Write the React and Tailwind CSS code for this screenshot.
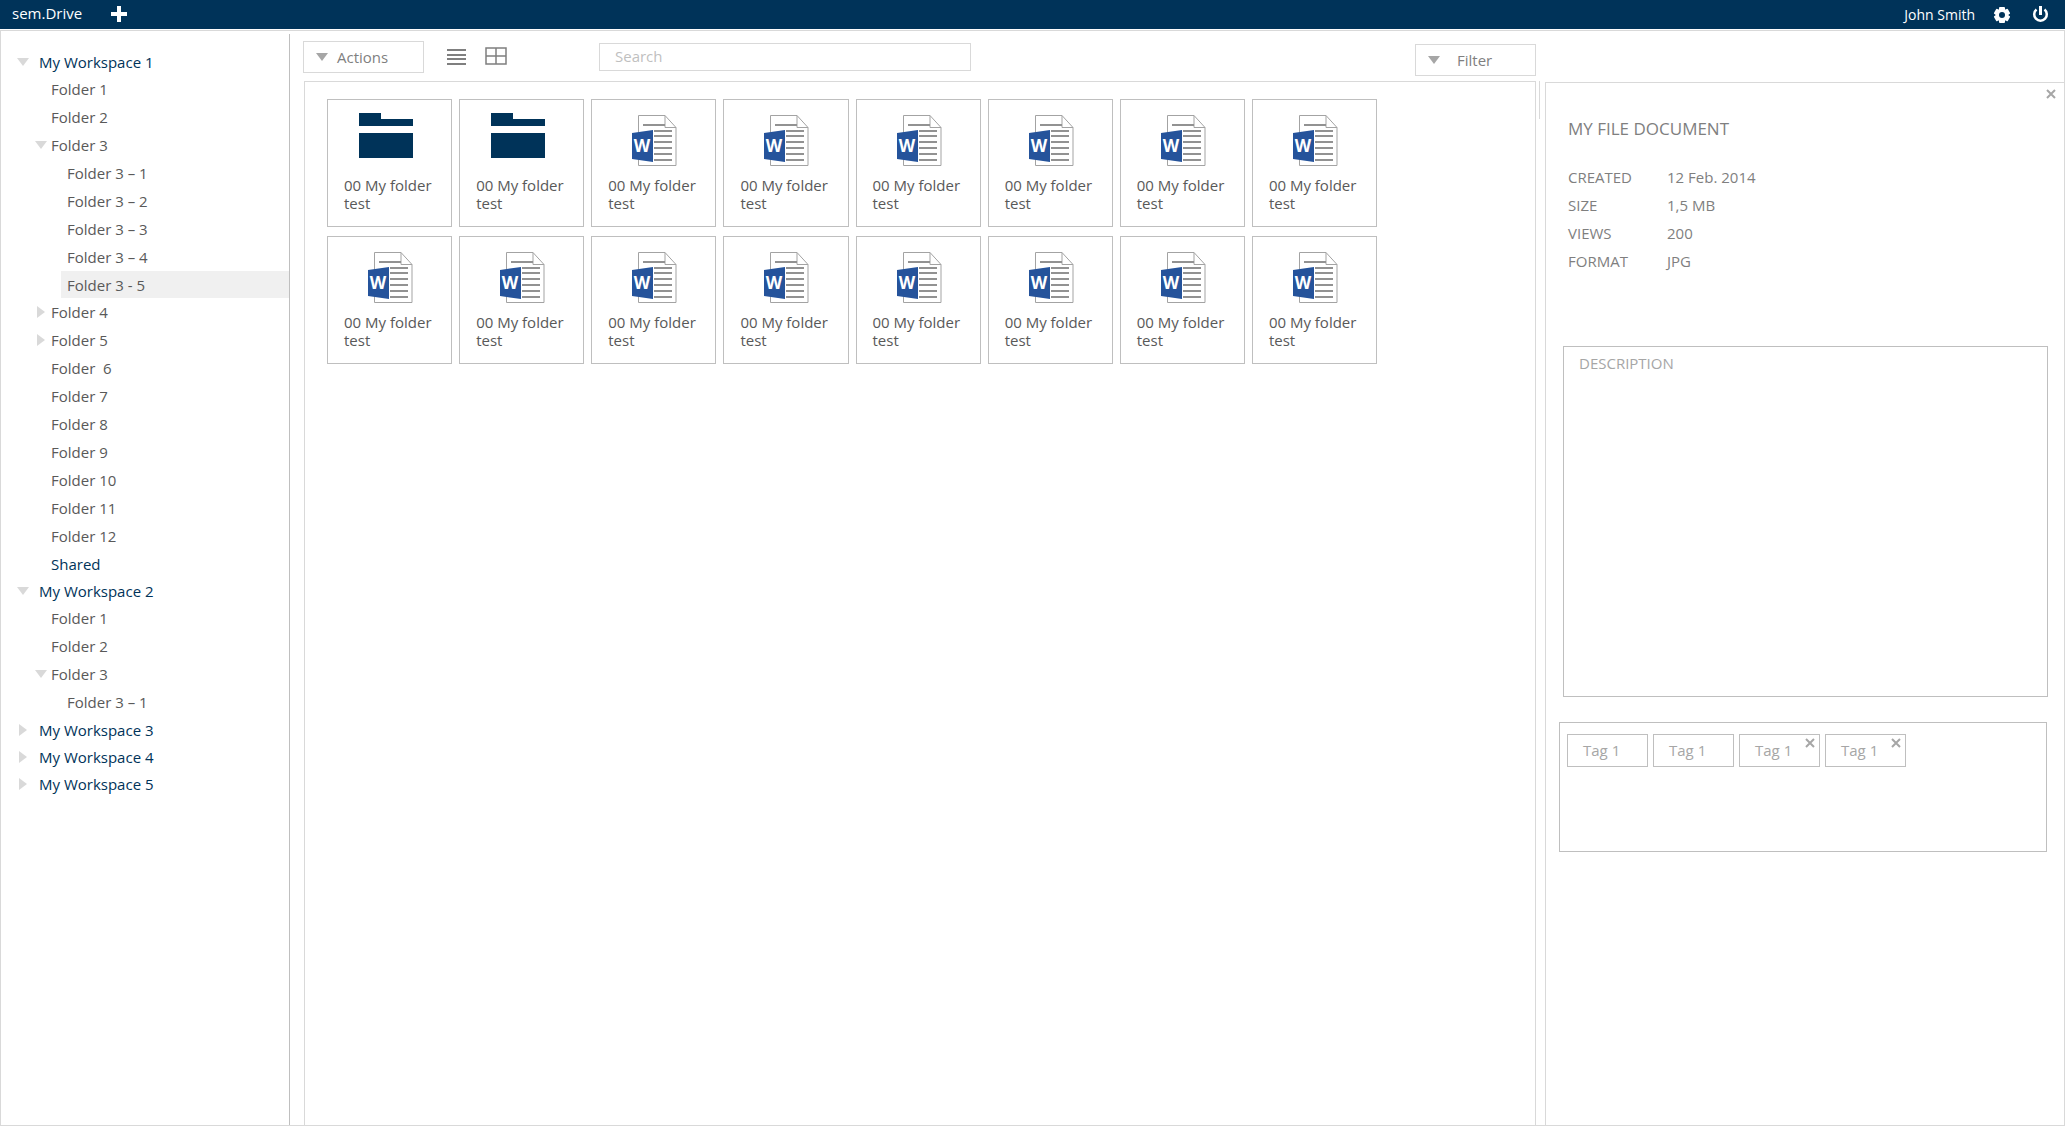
import React from "react";

const TREE = [
  { label: "My Workspace 1", level: 1, open: true },
  { label: "Folder 1", level: 2 },
  { label: "Folder 2", level: 2 },
  { label: "Folder 3", level: 2, open: true },
  { label: "Folder 3 – 1", level: 3 },
  { label: "Folder 3 – 2", level: 3 },
  { label: "Folder 3 – 3", level: 3 },
  { label: "Folder 3 – 4", level: 3 },
  { label: "Folder 3 - 5", level: 3, selected: true },
  { label: "Folder 4", level: 2, open: false },
  { label: "Folder 5", level: 2, open: false },
  { label: "Folder  6", level: 2 },
  { label: "Folder 7", level: 2 },
  { label: "Folder 8", level: 2 },
  { label: "Folder 9", level: 2 },
  { label: "Folder 10", level: 2 },
  { label: "Folder 11", level: 2 },
  { label: "Folder 12", level: 2 },
  { label: "Shared", level: 2, shared: true },
  { label: "My Workspace 2", level: 1, open: true },
  { label: "Folder 1", level: 2 },
  { label: "Folder 2", level: 2 },
  { label: "Folder 3", level: 2, open: true },
  { label: "Folder 3 – 1", level: 3 },
  { label: "My Workspace 3", level: 1, open: false },
  { label: "My Workspace 4", level: 1, open: false },
  { label: "My Workspace 5", level: 1, open: false },
];

const ITEMS = Array.from({ length: 16 }, (_, i) => ({
  id: i,
  kind: i < 2 ? "folder" : "word",
  name: "00 My folder test",
}));

const DETAILS = [
  ["CREATED", "12 Feb. 2014"],
  ["SIZE", "1,5 MB"],
  ["VIEWS", "200"],
  ["FORMAT", "JPG"],
];

const TAGS = [
  { id: 1, label: "Tag 1" },
  { id: 2, label: "Tag 1" },
  { id: 3, label: "Tag 1", removable: true },
  { id: 4, label: "Tag 1", removable: true },
];

function DownTriangle({ className }) {
  return (
    <svg viewBox="0 0 12 8" className={className} fill="currentColor" aria-hidden="true">
      <path d="M0 0h12L6 8z" />
    </svg>
  );
}

function RightTriangle({ className }) {
  return (
    <svg viewBox="0 0 8 12" className={className} fill="currentColor" aria-hidden="true">
      <path d="M0 0v12l8-6z" />
    </svg>
  );
}

function CrossIcon({ className }) {
  return (
    <svg viewBox="0 0 10 10" className={className} fill="none" stroke="currentColor" strokeWidth="2" aria-hidden="true">
      <path d="M1 1l8 8M9 1L1 9" />
    </svg>
  );
}

function FolderIcon() {
  return (
    <svg viewBox="0 0 54 45" className="h-[45px] w-[54px]" fill="#003359" aria-hidden="true">
      <path d="M0 0h22v6h32v7H0z" />
      <path d="M0 20h54v25H0z" />
    </svg>
  );
}

function WordIcon() {
  return (
    <svg viewBox="0 0 45 51" className="h-[51px] w-[45px]" aria-hidden="true">
      <path d="M6.5 .5H33l11 12v38H6.5z" fill="#fff" stroke="#a3a3a3" />
      <path d="M33 .5v12h11" fill="none" stroke="#a3a3a3" />
      <path d="M11 10h22M22 16h18M22 21h18M22 27h18M22 33h18M22 39h18M22 45h18" stroke="#929292" strokeWidth="2" />
      <path d="M0 18l21-3v32L0 44z" fill="#25539b" />
      <text
        x="10"
        y="37"
        textAnchor="middle"
        fill="#fff"
        className="font-['Open_Sans',sans-serif] text-[17px] font-bold"
      >
        W
      </text>
    </svg>
  );
}

function GearIcon() {
  return (
    <svg viewBox="0 0 18 18" className="size-[18px]" aria-hidden="true">
      <g fill="#fff">
        <rect x="6" y="1" width="6" height="16" rx="1" />
        <rect x="6" y="1" width="6" height="16" rx="1" transform="rotate(60 9 9)" />
        <rect x="6" y="1" width="6" height="16" rx="1" transform="rotate(120 9 9)" />
        <circle cx="9" cy="9" r="6.5" />
      </g>
      <circle cx="9" cy="9" r="3" fill="#003359" />
    </svg>
  );
}

function PowerIcon() {
  return (
    <svg viewBox="0 0 17 17" className="size-[17px]" fill="none" stroke="#fff" aria-hidden="true">
      <path d="M4.500 3.500a6.300 6.300 0 1 0 8 0" strokeWidth="2.500" />
      <path d="M8.500 0v9" strokeWidth="3" />
    </svg>
  );
}

function TreeRow({ item }) {
  const indent = item.level === 1 ? "pl-[38px]" : item.level === 2 ? "pl-[50px]" : "pl-[60px]";
  const blue = item.level === 1 || item.shared;
  const height = blue || item.selected ? "h-[27px]" : "h-7";
  const toggleBox = item.level === 1 ? "left-4" : "left-[34px]";
  return (
    <li
      role="treeitem"
      aria-level={item.level}
      aria-selected={!!item.selected}
      className={`relative flex items-center ${indent} ${height}`}
    >
      {item.open !== undefined && (
        <button
          type="button"
          aria-label={`Toggle ${item.label}`}
          className={`absolute flex w-3 items-center justify-center text-[#d9d9d9] ${toggleBox}`}
        >
          {item.open ? <DownTriangle className="h-2 w-3" /> : <RightTriangle className="h-3 w-2" />}
        </button>
      )}
      <a
        href="#"
        className={`flex h-full flex-1 items-center whitespace-pre ${blue ? "text-[#003359]" : "text-[#595959]"} ${
          item.level === 3 ? "pl-1.5" : ""
        } ${item.selected ? "bg-[#f0f0f0]" : ""}`}
      >
        {item.label}
      </a>
    </li>
  );
}

function Header() {
  return (
    <header className="flex h-[29px] items-center bg-[#003359] pr-4 pl-3 text-sm text-white">
      <span className="pb-0.5 text-[15px]">sem.Drive</span>
      <button type="button" aria-label="Add" className="ml-[29px] pb-0.5">
        <svg viewBox="0 0 16 16" className="size-4" fill="#fff" aria-hidden="true">
          <path d="M6 0h4v6h6v4h-6v6H6v-6H0V6h6z" />
        </svg>
      </button>
      <span className="mr-[18px] ml-auto">John Smith</span>
      <button type="button" aria-label="Settings" className="mr-[21px]">
        <GearIcon />
      </button>
      <button type="button" aria-label="Sign out">
        <PowerIcon />
      </button>
    </header>
  );
}

function Toolbar() {
  return (
    <div className="flex h-[50px] items-start pt-[10px] text-[#7f7f7f]">
      <button type="button" className="flex h-8 w-[121px] items-center gap-[9px] border border-[#d9d9d9] pl-3">
        <DownTriangle className="h-2 w-3 text-[#a6a6a6]" />
        Actions
      </button>
      <button type="button" aria-label="List view" className="mt-2 ml-[23px]">
        <svg viewBox="0 0 19 16" className="h-4 w-[19px]" stroke="#7f7f7f" strokeWidth="2" aria-hidden="true">
          <path d="M0 1h19M0 6h19M0 10h19M0 15h19" />
        </svg>
      </button>
      <button type="button" aria-label="Grid view" className="mt-[6px] ml-[19px]">
        <svg viewBox="0 0 22 18" className="h-[18px] w-[22px]" fill="none" stroke="#7f7f7f" aria-hidden="true">
          <path d="M1 1h20v16H1z" strokeWidth="1.500" />
          <path d="M11 1v16M1 9h20" strokeWidth="1.500" />
        </svg>
      </button>
      <input
        type="search"
        aria-label="Search"
        placeholder="Search"
        className="mt-[2px] ml-[92px] h-7 w-[372px] border border-[#d9d9d9] px-[15px] pb-0.5 outline-none placeholder:text-[#bfbfbf]"
      />
      <button
        type="button"
        className="mt-[3px] ml-auto flex h-8 w-[121px] items-center gap-[17px] border border-[#d9d9d9] pl-3"
      >
        <DownTriangle className="h-2 w-3 text-[#a6a6a6]" />
        Filter
      </button>
    </div>
  );
}

function FileCard({ item }) {
  return (
    <li className="h-32 border border-[#bfbfbf]">
      <a href="#" className="block h-full text-[#595959]">
        <span className={`flex h-[73px] justify-center ${item.kind === "folder" ? "pt-[13px] pr-2" : "pt-[15px] pl-0.5"}`}>
          {item.kind === "folder" ? <FolderIcon /> : <WordIcon />}
        </span>
        <span className="block px-4 pt-[3px] leading-[18px]">{item.name}</span>
      </a>
    </li>
  );
}

function DetailsPanel() {
  return (
    <aside className="mt-[51px] -mb-px flex w-[519px] flex-col border-t border-b border-l border-[#d9d9d9] text-[#7f7f7f]">
      <button type="button" aria-label="Close details" className="mt-1.5 mr-2 self-end text-[#a6a6a6]">
        <CrossIcon className="size-[10px]" />
      </button>
      <h2 className="mt-[18px] ml-[22px] text-[17px] leading-6">MY FILE DOCUMENT</h2>
      <dl className="mt-[22px] ml-[22px]">
        {DETAILS.map(([k, v]) => (
          <div key={k} className="flex h-7 items-center">
            <dt className="w-[99px]">{k}</dt>
            <dd>{v}</dd>
          </div>
        ))}
      </dl>
      <textarea
        aria-label="Description"
        placeholder="DESCRIPTION"
        className="mt-[71px] mr-4 ml-[17px] h-[351px] resize-none border border-[#bfbfbf] px-[15px] py-1.5 outline-none placeholder:text-[#a6a6a6]"
      />
      <ul className="mt-[25px] mr-[17px] ml-[13px] flex h-[130px] flex-wrap content-start gap-[5px] border border-[#bfbfbf] px-[7px] pt-[11px] text-[#a6a6a6]">
        {TAGS.map((t) => (
          <li key={t.id} className="relative flex h-[33px] w-[81px] items-center border border-[#bfbfbf] pb-0.5 pl-[15px]">
            {t.label}
            {t.removable && (
              <button type="button" aria-label="Remove tag" className="absolute top-[3px] right-1">
                <CrossIcon className="size-[10px]" />
              </button>
            )}
          </li>
        ))}
      </ul>
    </aside>
  );
}

export default function App() {
  return (
    <div className="flex min-h-screen flex-col bg-white font-['Open_Sans',sans-serif] text-[15px] leading-5">
      <Header />
      <div className="mt-px mb-px flex flex-1 border border-[#d9d9d9]">
        <nav aria-label="Workspaces" className="mt-[3px] w-[289px] border-r border-[#bfbfbf]">
          <ul role="tree" className="pt-[14px]">
            {TREE.map((item, i) => (
              <TreeRow key={i} item={item} />
            ))}
          </ul>
        </nav>
        <main className="ml-[13px] flex min-w-0 flex-1 flex-col">
          <Toolbar />
          <ul className="ml-px grid flex-1 auto-rows-max grid-cols-[repeat(auto-fill,minmax(125px,1fr))] gap-x-[7px] gap-y-[9px] border-t border-r border-l border-[#d9d9d9] pt-[17px] pr-[158px] pl-[22px]">
            {ITEMS.map((item) => (
              <FileCard key={item.id} item={item} />
            ))}
          </ul>
        </main>
        <div role="separator" className="mt-[50px] mr-[5px] ml-[3px] h-[38px] w-px bg-[#d9d9d9]" />
        <DetailsPanel />
      </div>
    </div>
  );
}
